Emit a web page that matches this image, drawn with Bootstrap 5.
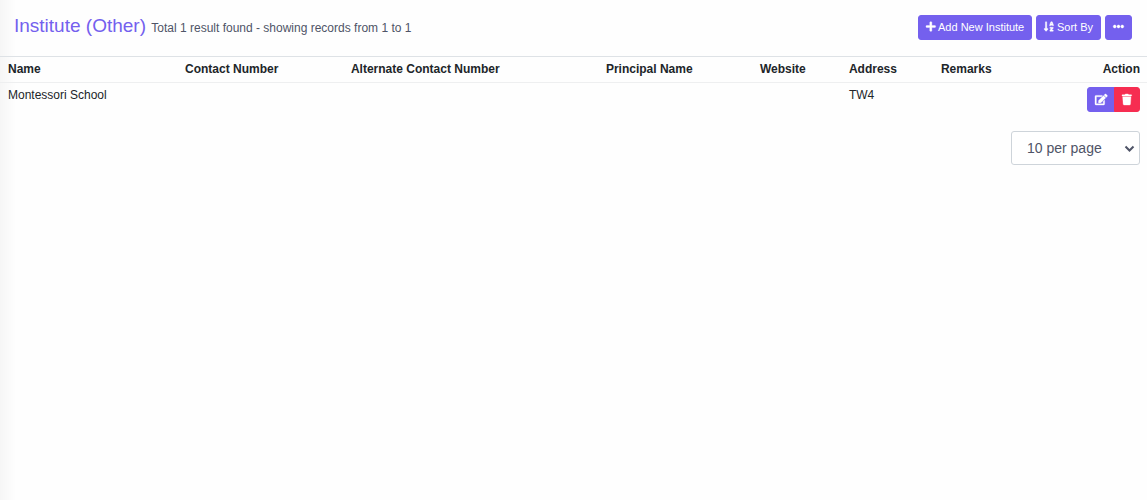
<!DOCTYPE html>
<html lang="en">
<head>
<meta charset="utf-8">
<meta name="viewport" content="width=device-width, initial-scale=1">
<title>Institute (Other)</title>
<link href="https://cdn.jsdelivr.net/npm/bootstrap@5.3.0/dist/css/bootstrap.min.css" rel="stylesheet">
<style>
body { font-family: "Liberation Sans", Arial, sans-serif; font-size: 12px; line-height: 18px; color: #212529; background: linear-gradient(to right, #f6f6f6, #fefefe 16px) #fefefe; }
.page-head { padding: 15px 15px 16px 14px; }
.page-title { font-size: 19px; line-height: 22px; color: #7460ee; }
.page-title small { font-size: 12px; color: #4f5467; }
.btn-sm { --bs-btn-font-size: 11px; --bs-btn-padding-x: 7px; --bs-btn-padding-y: 3px; --bs-btn-border-radius: 3px; line-height: 17px; }
.btn-violet { --bs-btn-color: #fff; --bs-btn-bg: #7460ee; --bs-btn-border-color: #7460ee; --bs-btn-hover-color: #fff; --bs-btn-hover-bg: #5e47eb; --bs-btn-hover-border-color: #573fea; }
.btn-rose { --bs-btn-color: #fff; --bs-btn-bg: #f62d51; --bs-btn-border-color: #f62d51; --bs-btn-hover-color: #fff; --bs-btn-hover-bg: #ea0a32; --bs-btn-hover-border-color: #de0a30; }
.icon { height: 11px; fill: currentColor; stroke: currentColor; stroke-width: 16; vertical-align: -1px; overflow: visible; }
.icon-row { vertical-align: -2px; }
.records { --bs-table-bg: transparent; border-top: 1px solid #dee2e6; line-height: 16px; }
.records th { padding: 4px 7px 5px 8px; border-bottom: 0; }
.records td { padding: 4px 7px 3px 8px; border-bottom: 0; }
.records tbody tr { border-top: 1px solid #eeeff0; }
.pager { padding-right: 7px; }
.per-page { width: 129px; height: 34px; padding: 0 24px 0 15px; font-size: 14px; color: #4f5467; border-color: #ced4da; border-radius: 3px; background-color: #fff; background-position: right 4px center; background-size: 11px 11px; background-image: url("data:image/svg+xml,%3Csvg xmlns='http://www.w3.org/2000/svg' viewBox='0 0 11 11'%3E%3Cpath d='M1.5 3.5l4 4 4-4' fill='none' stroke='%234f5467' stroke-width='2'/%3E%3C/svg%3E"); }
</style>
</head>
<body>
<header class="page-head d-flex justify-content-between align-items-start">
  <h1 class="page-title fw-normal mb-0">Institute (Other) <small>Total 1 result found - showing records from 1 to 1</small></h1>
  <div class="d-flex gap-1">
    <button type="button" class="btn btn-sm btn-violet"><svg class="icon" viewBox="0 0 448 512" aria-hidden="true"><path d="M416 208H272V64c0-17.67-14.33-32-32-32h-32c-17.67 0-32 14.33-32 32v144H32c-17.67 0-32 14.33-32 32v32c0 17.67 14.33 32 32 32h144v144c0 17.67 14.33 32 32 32h32c17.67 0 32-14.33 32-32V304h144c17.67 0 32-14.33 32-32v-32c0-17.67-14.33-32-32-32z"/></svg> Add New Institute</button>
    <button type="button" class="btn btn-sm btn-violet"><svg class="icon" viewBox="0 0 448 512" aria-hidden="true"><path d="M176 352h-48V48a16 16 0 0 0-16-16H80a16 16 0 0 0-16 16v304H16c-14.19 0-21.36 17.24-11.29 27.31l80 96a16 16 0 0 0 22.62 0l80-96C197.35 369.26 190.22 352 176 352zm240-64H288a16 16 0 0 0-16 16v32a16 16 0 0 0 16 16h56l-61.26 70.45A32 32 0 0 0 272 446.37V464a16 16 0 0 0 16 16h128a16 16 0 0 0 16-16v-32a16 16 0 0 0-16-16h-56l61.26-70.45A32 32 0 0 0 432 321.63V304a16 16 0 0 0-16-16zm31.06-85.38l-59.27-160A16 16 0 0 0 372.72 32h-41.44a16 16 0 0 0-15.07 10.62l-59.27 160A16 16 0 0 0 272 224h24.83a16 16 0 0 0 15.23-11.08l4.42-12.92h71l4.41 12.92A16 16 0 0 0 407.16 224H432a16 16 0 0 0 15.06-21.38zM335.61 144L352 96l16.39 48z"/></svg> Sort By</button>
    <button type="button" class="btn btn-sm btn-violet" aria-label="More"><svg class="icon" viewBox="0 0 512 512" aria-hidden="true"><path d="M328 256c0 39.8-32.2 72-72 72s-72-32.2-72-72 32.2-72 72-72 72 32.2 72 72zm104-72c-39.8 0-72 32.2-72 72s32.2 72 72 72 72-32.2 72-72-32.2-72-72-72zm-352 0c-39.8 0-72 32.2-72 72s32.2 72 72 72 72-32.2 72-72-32.2-72-72-72z"/></svg></button>
  </div>
</header>
<main>
  <table class="table records mb-3">
    <colgroup>
      <col style="width:15.43%"><col style="width:14.47%"><col style="width:22.23%"><col style="width:13.43%"><col style="width:7.76%"><col style="width:8.02%"><col style="width:8.66%"><col style="width:10%">
    </colgroup>
    <thead>
      <tr><th scope="col">Name</th><th scope="col">Contact Number</th><th scope="col">Alternate Contact Number</th><th scope="col">Principal Name</th><th scope="col">Website</th><th scope="col">Address</th><th scope="col">Remarks</th><th scope="col" class="text-end">Action</th></tr>
    </thead>
    <tbody>
      <tr><td>Montessori School</td><td></td><td></td><td></td><td></td><td>TW4</td><td></td>
        <td class="text-end"><div class="btn-group">
          <button type="button" class="btn btn-sm btn-violet" aria-label="Edit"><svg class="icon icon-row" viewBox="0 0 576 512" aria-hidden="true"><path d="M402.6 83.2l90.2 90.2c3.8 3.8 3.8 10 0 13.8L274.4 405.6l-92.8 10.3c-12.4 1.4-22.9-9.1-21.5-21.5l10.3-92.8L388.8 83.2c3.8-3.8 10-3.8 13.8 0zm162-22.9l-48.8-48.8c-15.2-15.2-39.9-15.2-55.2 0l-35.4 35.4c-3.8 3.8-3.8 10 0 13.8l90.2 90.2c3.8 3.8 10 3.8 13.8 0l35.4-35.4c15.2-15.3 15.2-40 0-55.2zM384 346.2V448H64V128h229.8c3.2 0 6.2-1.3 8.5-3.5l40-40c7.6-7.6 2.2-20.5-8.5-20.5H48C21.5 64 0 85.5 0 112v352c0 26.5 21.5 48 48 48h352c26.5 0 48-21.5 48-48V306.2c0-10.7-12.9-16-20.5-8.5l-40 40c-2.2 2.3-3.5 5.3-3.5 8.5z"/></svg></button>
          <button type="button" class="btn btn-sm btn-rose" aria-label="Delete"><svg class="icon icon-row" viewBox="0 0 448 512" aria-hidden="true"><path d="M432 32H312l-9.4-18.7A24 24 0 0 0 281.1 0H166.8a23.72 23.72 0 0 0-21.4 13.3L136 32H16A16 16 0 0 0 0 48v32a16 16 0 0 0 16 16h416a16 16 0 0 0 16-16V48a16 16 0 0 0-16-16zM53.2 467a48 48 0 0 0 47.9 45h245.8a48 48 0 0 0 47.9-45L416 128H32z"/></svg></button>
        </div></td></tr>
    </tbody>
  </table>
  <div class="pager d-flex justify-content-end">
    <select class="form-select per-page" aria-label="Records per page"><option>10 per page</option><option>25 per page</option><option>50 per page</option></select>
  </div>
</main>
<script src="https://cdn.jsdelivr.net/npm/bootstrap@5.3.0/dist/js/bootstrap.bundle.min.js"></script>
</body>
</html>
